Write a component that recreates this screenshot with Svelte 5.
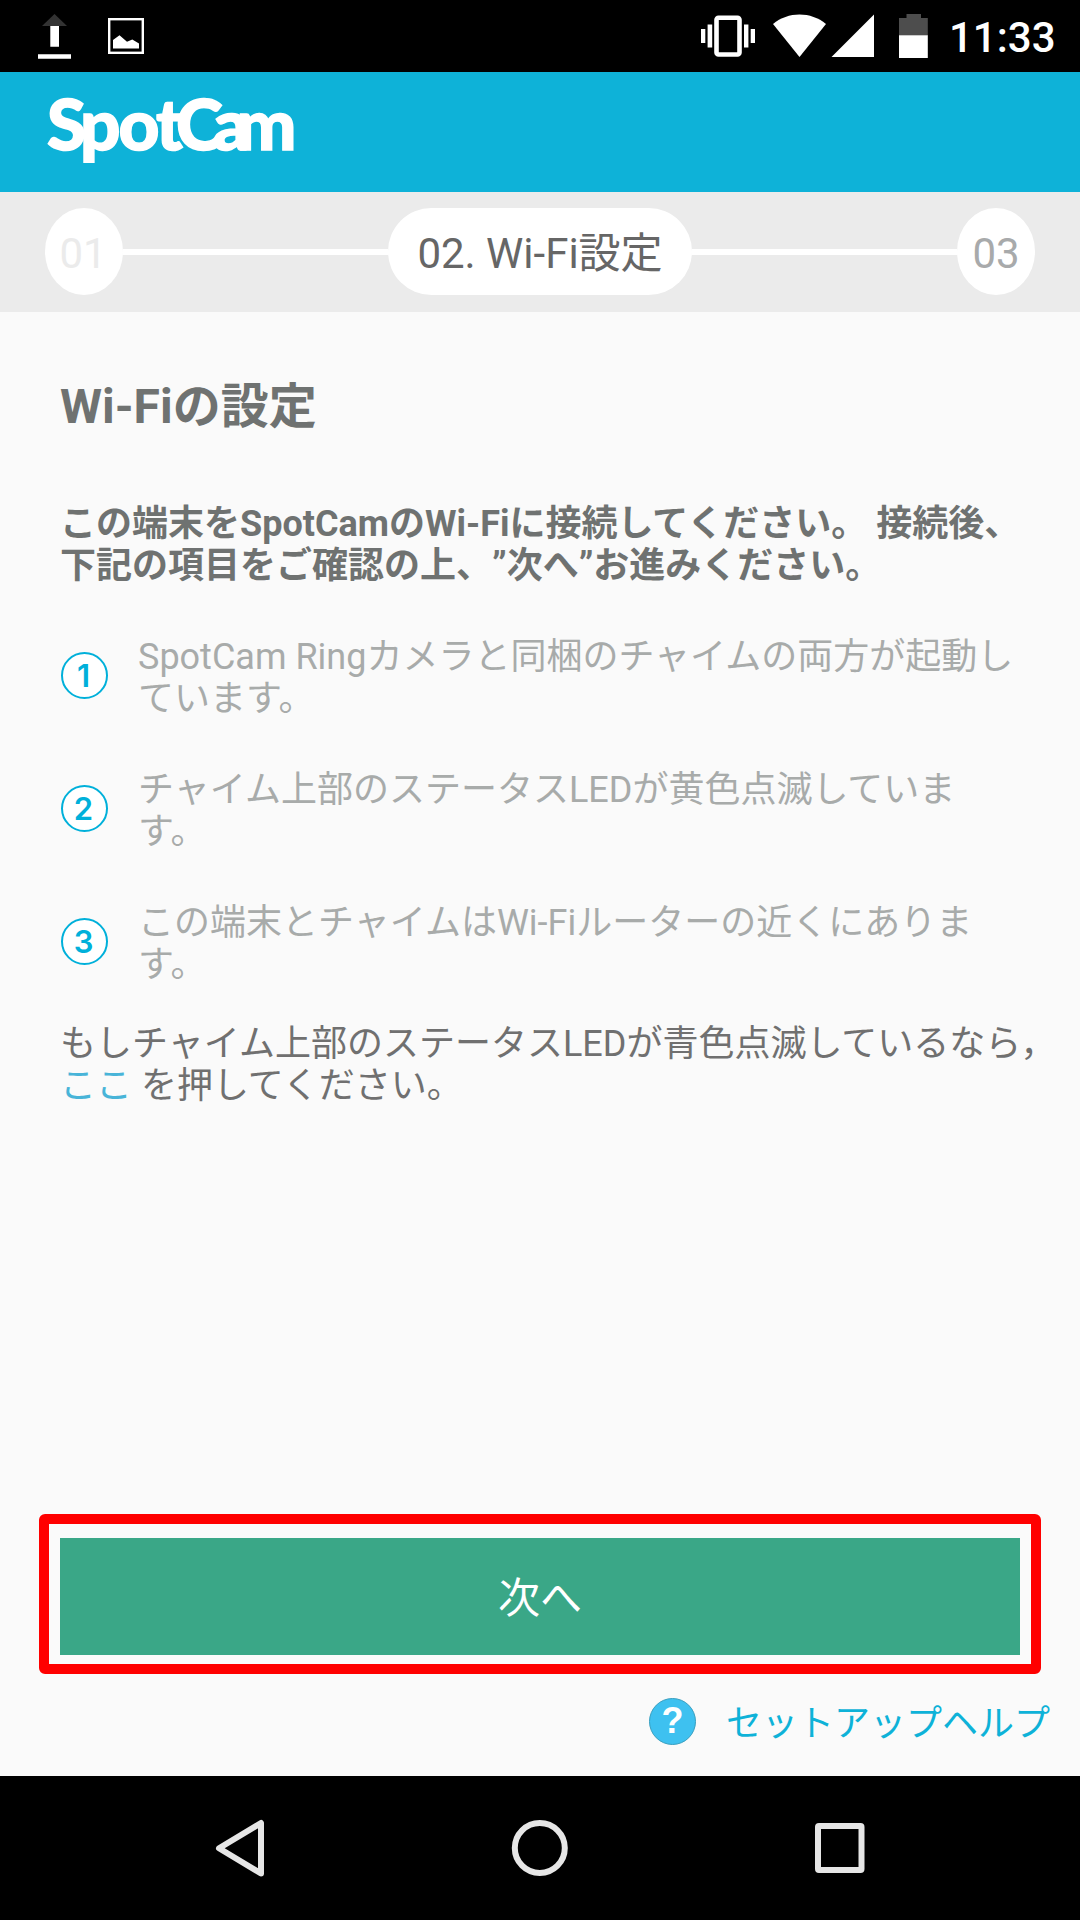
<script>
  const items = [
    ['SpotCam Ringカメラと同梱のチャイムの両方が起動し', 'ています。'],
    ['チャイム上部のステータスLEDが黄色点滅していま', 'す。'],
    ['この端末とチャイムはWi-Fiルーターの近くにありま', 'す。']
  ];
</script>

<div class="screen">
  <div class="status-bar">
    <svg class="status-icons" width="160" height="72" viewBox="0 0 160 72">
      <path d="M42 26 54.5 14 67 26z" fill="#333" />
      <path d="M50.3 26H59v20.7h-8.7zM38 54.3h33v4.5H38z" fill="#fff" />
      <rect x="109.2" y="19.2" width="33.6" height="33.6" fill="none" stroke="#fff" stroke-width="2.4" />
      <path d="M113 48.5V40l6.5-4.8 7.5 6.6 5.3-2.4 6.7 4v5.1z" fill="#fff" />
    </svg>
    <svg class="status-icons" width="240" height="72" viewBox="696 0 240 72">
      <rect x="716.5" y="17.8" width="23" height="36.7" rx="2" fill="none" stroke="#fff" stroke-width="4.6" />
      <path d="M701 29h4.3v14H701zM707.6 24.5h4.6v23h-4.6zM744 24.5h4.4v23H744zM750.7 29h4.3v14h-4.3z" fill="#fff" />
      <path d="M773 24C788 11.3 811 11.3 826 24L799.5 57z" fill="#fff" />
      <path d="M831.5 57 874 14.5V57z" fill="#fff" />
      <path d="M899 36V18h7.5v-4h14.5v4h6.8v18z" fill="#4d4d4d" />
      <path d="M899 35.3h28.8V58H899z" fill="#fff" />
    </svg>
    <span class="clock">11:33</span>
  </div>

  <header class="header">
    <svg class="logo" width="280" height="108" viewBox="40 72 280 108">
      <text x="47 80 118.5 156 176 213 236.5" y="149.5">SpotCam</text>
    </svg>
  </header>

  <div class="steps">
    <span class="step done">01</span>
    <span class="line"></span>
    <span class="step current">02. Wi-Fi設定</span>
    <span class="line"></span>
    <span class="step">03</span>
  </div>

  <main class="content">
    <h1>Wi-Fiの設定</h1>
    <p class="lead">この端末をSpotCamのWi-Fiに接続してください。 接続後、<br />下記の項目をご確認の上、”次へ”お進みください。</p>

    <ol>
      {#each items as [first, second], i}
        <li>
          <span class="number">{i + 1}</span>
          <span>{first}<br />{second}</span>
        </li>
      {/each}
    </ol>

    <p class="note">もしチャイム上部のステータスLEDが青色点滅しているなら，<br /><a href="#here">ここ</a> を押してください。</p>
  </main>

  <div class="action">
    <button>次へ</button>
  </div>

  <div class="help">
    <span class="help-icon">?</span>
    <a href="#help">セットアップヘルプ</a>
  </div>

  <nav class="nav-bar">
    <svg width="1080" height="144" viewBox="0 1776 1080 144" fill="none" stroke="#e6e6e6" stroke-width="6" stroke-linejoin="round">
      <path d="M219 1848.2 261 1823v50.5z" />
      <circle cx="539.8" cy="1848" r="25" />
      <rect x="818" y="1826" width="43.5" height="44" rx="1" />
    </svg>
  </nav>
</div>

<style>
  :global(body) {
    margin: 0;
  }

  .screen {
    display: flex;
    flex-direction: column;
    width: 1080px;
    height: 1920px;
    overflow: hidden;
    background: #fafafa;
    color: #6f7271;
    font-family: Roboto, "Noto Sans CJK JP", sans-serif;
    font-size: 36px;
    line-height: 42px;
    text-spacing-trim: space-all;
    white-space: nowrap;
  }

  .status-bar {
    display: flex;
    align-items: center;
    height: 72px;
    background: #000;
  }

  .status-icons:first-child {
    margin-right: 536px;
  }

  .clock {
    margin-left: 13px;
    padding-top: 4px;
    color: #fff;
    font-size: 42px;
    font-weight: 500;
  }

  .header {
    box-sizing: border-box;
    height: 120px;
    padding-left: 40px;
    background: #0eb2d8;
  }

  .logo {
    display: block;
    fill: #fff;
    stroke: #fff;
    stroke-width: 1.5px;
    font-family: Lato, sans-serif;
    font-size: 71px;
    font-weight: 900;
  }

  .steps {
    display: flex;
    align-items: center;
    box-sizing: border-box;
    height: 120px;
    padding: 0 45px 1px;
    background: #ebebeb;
    font-size: 42px;
  }

  .step {
    display: flex;
    align-items: center;
    justify-content: center;
    box-sizing: border-box;
    width: 78px;
    height: 87px;
    padding-top: 5px;
    border-radius: 50%;
    background: #fff;
    color: #a8aaab;
  }

  .step.done {
    padding-right: 2px;
    color: #ebebeb;
  }

  .step.current {
    width: 304px;
    border-radius: 43.5px;
    color: #666;
  }

  .line {
    flex: 1;
    height: 6px;
    background: #fff;
  }

  .content {
    flex: 1;
    padding: 67px 0 0 60px;
  }

  h1 {
    margin: 0;
    font-size: 48px;
    font-weight: 700;
    line-height: 56px;
  }

  .lead {
    margin: 68px 0 0;
    font-weight: 700;
  }

  ol {
    display: flex;
    flex-direction: column;
    gap: 49px;
    margin: 49px 0 0;
    padding: 0;
    list-style: none;
    color: #a8abaa;
  }

  li {
    display: flex;
    align-items: center;
    gap: 30px;
  }

  .number {
    display: flex;
    align-items: center;
    justify-content: center;
    box-sizing: border-box;
    width: 47px;
    height: 47px;
    margin-bottom: 5px;
    margin-left: 1px;
    padding-right: 2px;
    border: 2px solid #00b0da;
    border-radius: 50%;
    background: #fff;
    color: #00b0da;
    font-family: Inter, sans-serif;
    font-size: 31px;
    font-weight: 600;
  }

  .note {
    margin: 37px 0 0;
    color: #707070;
  }

  a {
    color: #0eb2d8;
    text-decoration: none;
  }

  .note a {
    color: #48b4d8;
  }

  .action {
    margin: 0 39px;
    padding: 14px 11px 9px;
    border: 10px solid #f00;
    border-radius: 6px;
  }

  button {
    display: block;
    width: 100%;
    height: 117px;
    padding: 4px 0 0;
    border: 0;
    background: #3aa787;
    color: #fff;
    font: inherit;
    font-size: 42px;
  }

  .help {
    display: flex;
    align-items: center;
    justify-content: flex-end;
    gap: 30px;
    box-sizing: border-box;
    height: 102px;
    padding: 0 30px 2px 0;
  }

  .help-icon {
    display: flex;
    align-items: center;
    justify-content: center;
    box-sizing: border-box;
    width: 47px;
    height: 47px;
    margin-bottom: 6px;
    border: 1px solid #379fc0;
    border-radius: 50%;
    background: #3ec1f0;
    color: #fff;
    font-family: "Liberation Sans", sans-serif;
    font-size: 36px;
    font-weight: 700;
  }

  .nav-bar {
    height: 144px;
    background: #000;
  }

  .nav-bar svg {
    display: block;
  }
</style>
